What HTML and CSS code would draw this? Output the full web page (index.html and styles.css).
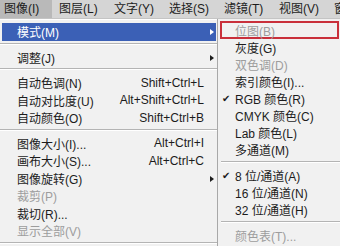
FILE: index.html
```html
<!DOCTYPE html>
<html>
<head>
<meta charset="utf-8"/>
<title>图像菜单</title>
<link rel="stylesheet" href="styles.css">
</head>
<body>
<div class="menubar">
  <span class="top active">图像(I)</span>
  <span class="top">图层(L)</span>
  <span class="top">文字(Y)</span>
  <span class="top">选择(S)</span>
  <span class="top">滤镜(T)</span>
  <span class="top">视图(V)</span>
  <span class="top last">窗</span>
</div>

<div class="menus">
  <div class="menu main">
    <div class="item hl"><span class="label">模式(M)</span><span class="arrow"></span></div>
    <div class="sep"></div>
    <div class="item"><span class="label">调整(J)</span><span class="arrow"></span></div>
    <div class="sep"></div>
    <div class="item"><span class="label">自动色调(N)</span><span class="key">Shift+Ctrl+L</span></div>
    <div class="item"><span class="label">自动对比度(U)</span><span class="key">Alt+Shift+Ctrl+L</span></div>
    <div class="item"><span class="label">自动颜色(O)</span><span class="key">Shift+Ctrl+B</span></div>
    <div class="sep"></div>
    <div class="item"><span class="label">图像大小(I)...</span><span class="key">Alt+Ctrl+I</span></div>
    <div class="item"><span class="label">画布大小(S)...</span><span class="key">Alt+Ctrl+C</span></div>
    <div class="item"><span class="label">图像旋转(G)</span><span class="arrow"></span></div>
    <div class="item off"><span class="label">裁剪(P)</span></div>
    <div class="item"><span class="label">裁切(R)...</span></div>
    <div class="item off"><span class="label">显示全部(V)</span></div>
    <div class="sep"></div>
  </div>

  <div class="menu sub">
    <div class="item off boxed"><span class="label">位图(B)</span></div>
    <div class="item"><span class="label">灰度(G)</span></div>
    <div class="item off"><span class="label">双色调(D)</span></div>
    <div class="item"><span class="label">索引颜色(I)...</span></div>
    <div class="item checked"><span class="label">RGB 颜色(R)</span></div>
    <div class="item"><span class="label">CMYK 颜色(C)</span></div>
    <div class="item"><span class="label">Lab 颜色(L)</span></div>
    <div class="item"><span class="label">多通道(M)</span></div>
    <div class="sep"></div>
    <div class="item checked"><span class="label">8 位/通道(A)</span></div>
    <div class="item"><span class="label">16 位/通道(N)</span></div>
    <div class="item"><span class="label">32 位/通道(H)</span></div>
    <div class="sep"></div>
    <div class="item off"><span class="label">颜色表(T)...</span></div>
  </div>
</div>
</body>
</html>
```

FILE: styles.css
```css
body {
  margin: 0;
  width: 340px;
  height: 246px;
  overflow: hidden;
  background: #efefef;
  font-family: "Liberation Sans", "Noto Sans CJK SC", sans-serif;
  font-size: 12px;
  color: #1c1c1c;
}

/* top menu bar */
.menubar {
  display: flex;
  height: 18px;
  overflow: hidden;
  background: #d5d5d5;
  border-bottom: 1px solid #c4c4c4;
  white-space: nowrap;
}

.top {
  flex: none;
  width: 51px;
  padding-left: 4px;
  line-height: 18px;
}

.top.active {
  background: #b9b9b9;
  width: 48px;
  margin-right: 3px;
}

.top.last {
  flex: 1;
  width: auto;
  overflow: hidden;
}

/* drop downs */
.menus {
  display: flex;
  height: 227px;
}

.menu {
  background: #f1f1f1;
}

.main {
  width: 217px;
  padding-top: 3px;
  border-top: 1px solid #ffffff;
}

.sub {
  flex: 1;
  padding-top: 3px;
  border-left: 1px solid #a8a8a8;
}

.item {
  position: relative;
  display: flex;
  align-items: center;
  height: 17.5px;
  padding: 0 13px 0 17px;
  white-space: nowrap;
}

.sub .item {
  height: 17px;
  padding-left: 17px;
}

.label {
  flex: 1;
}

.key {
  text-align: right;
}

.off {
  color: #9d9d9d;
}

.hl {
  background: #3b60b6;
  color: #ffffff;
  margin: 0 1px 0 2px;
  padding-left: 15px;
}

.arrow {
  position: absolute;
  right: 3px;
  top: 6px;
  width: 0;
  height: 0;
  border-left: 4px solid #1c1c1c;
  border-top: 3.5px solid transparent;
  border-bottom: 3.5px solid transparent;
}

.hl .arrow {
  right: 2px;
  border-left-color: #ffffff;
}

.checked::before {
  content: "\2714";
  position: absolute;
  left: 4px;
  top: 0;
  font-family: "DejaVu Sans", sans-serif;
  font-size: 10px;
  line-height: 17px;
  color: #1c1c1c;
}

.sub .boxed {
  margin: -1px 1px 0 2px;
  padding-left: 13px;
  border: 2px solid #c9303b;
  height: 14px;
}

.sep {
  height: 8px;
  box-sizing: border-box;
  padding-top: 2px;
}

.sep::before {
  content: "";
  display: block;
  border-top: 1px solid #b4b4b4;
  border-bottom: 1px solid #ffffff;
}

.sub .sep {
  height: 9px;
  padding-top: 3px;
  margin-left: 3px;
}
```
